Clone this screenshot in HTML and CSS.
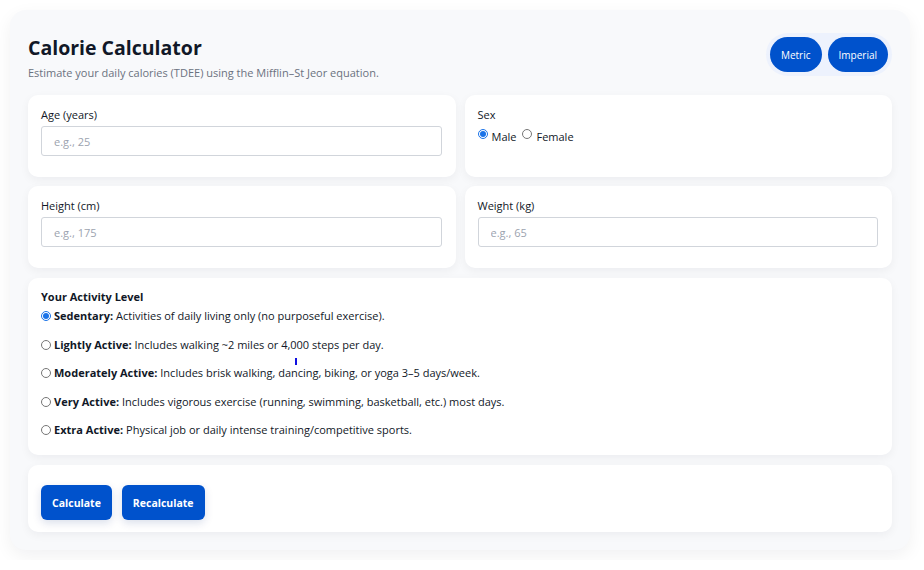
FILE: index.html
```html
<!DOCTYPE html>
<html lang="en">
<head>
<meta charset="utf-8">
<title>Calorie Calculator</title>
<link rel="stylesheet" href="styles.css">
</head>
<body>
<div class="app">
  <header class="header">
    <div class="heading">
      <h1 class="title">Calorie Calculator</h1>
      <p class="subtitle">Estimate your daily calories (TDEE) using the Mifflin–St Jeor equation.</p>
    </div>
    <div class="units">
      <button class="unit-btn">Metric</button>
      <button class="unit-btn">Imperial</button>
    </div>
  </header>

  <div class="grid">
    <div class="card">
      <label class="label" for="age">Age (years)</label>
      <input class="input" id="age" type="text" placeholder="e.g., 25">
    </div>
    <div class="card">
      <div class="label">Sex</div>
      <div class="sex-row">
        <label class="sex-opt"><input class="radio" type="radio" name="sex" checked> Male</label>
        <label class="sex-opt"><input class="radio" type="radio" name="sex"> Female</label>
      </div>
    </div>
    <div class="card">
      <label class="label" for="height">Height (cm)</label>
      <input class="input" id="height" type="text" placeholder="e.g., 175">
    </div>
    <div class="card">
      <label class="label" for="weight">Weight (kg)</label>
      <input class="input" id="weight" type="text" placeholder="e.g., 65">
    </div>
  </div>

  <div class="card activity">
    <div class="activity-title">Your Activity Level</div>
    <label class="act-opt"><input class="radio" type="radio" name="act" checked><b>Sedentary:</b> Activities of daily living only (no purposeful exercise).</label>
    <label class="act-opt"><input class="radio" type="radio" name="act"><b>Lightly Active:</b> Includes walking ~2 miles or 4,000 steps per day.</label>
    <label class="act-opt"><input class="radio" type="radio" name="act"><b>Moderately Active:</b> Includes brisk walking, dancing, biking, or yoga 3–5 days/week.</label>
    <label class="act-opt"><input class="radio" type="radio" name="act"><b>Very Active:</b> Includes vigorous exercise (running, swimming, basketball, etc.) most days.</label>
    <label class="act-opt"><input class="radio" type="radio" name="act"><b>Extra Active:</b> Physical job or daily intense training/competitive sports.</label>
    <span class="caret"></span>
  </div>

  <div class="card actions">
    <button class="btn">Calculate</button>
    <button class="btn">Recalculate</button>
  </div>
</div>
</body>
</html>
```
FILE: styles.css
```css
* { box-sizing: border-box; }
html, body { margin: 0; background: #ffffff; }
body {
  padding: 10px;
  font-family: "Open Sans", "Noto Sans", sans-serif;
  color: #111827;
}
.app {
  width: 900px;
  background: #f8f9fb;
  border-radius: 16px;
  box-shadow: 0 6px 18px rgba(15, 23, 42, 0.06);
  padding: 25px 18px 18px;
}
.header {
  display: flex;
  justify-content: space-between;
  align-items: flex-start;
  margin-bottom: 15px;
}
.title {
  margin: 0;
  font-size: 19.5px;
  line-height: 26px;
  font-weight: 700;
  color: #111827;
}
.subtitle {
  margin: 5px 0 0;
  font-size: 11px;
  line-height: 14px;
  color: #6b7280;
}
.units {
  display: flex;
  gap: 6px;
  padding: 4px;
  background: #edf2fd;
  border-radius: 24px;
  margin-top: -2px;
}
.unit-btn {
  height: 35px;
  padding: 0 11px;
  border: none;
  border-radius: 18px;
  background: #0052cc;
  color: #fff;
  font-family: inherit;
  font-size: 10px;
}
.grid {
  display: grid;
  grid-template-columns: 1fr 1fr;
  gap: 9px 9px;
}
.card {
  background: #fff;
  border-radius: 10px;
  box-shadow: 0 3px 10px rgba(15, 23, 42, 0.05);
  padding: 12px 14px 21px 13px;
}
.label {
  display: block;
  font-size: 11px;
  line-height: 16px;
  margin-bottom: 3px;
  color: #111827;
}
.input {
  display: block;
  width: 100%;
  height: 30px;
  border: 1px solid #d1d5db;
  border-radius: 3px;
  padding: 0 12px;
  font-family: inherit;
  font-size: 11px;
  color: #111827;
}
.input::placeholder { color: #9ca3af; }
.sex-row { display: flex; gap: 6px; font-size: 11px; margin-top: 0; }
.sex-opt { display: inline-flex; align-items: flex-start; line-height: 22px; }
.sex-opt .radio { margin: 3px 4px 0 0; }
.radio {
  width: 10px;
  height: 10px;
  margin: 0 3px 0 0;
  accent-color: #1a73e8;
}
.activity {
  margin-top: 10px;
  padding: 11px 14px 18px 13px;
  position: relative;
}
.activity-title {
  font-size: 11px;
  font-weight: 700;
  line-height: 16px;
  margin-bottom: 4px;
}
.act-opt {
  display: flex;
  align-items: center;
  font-size: 11px;
  line-height: 14px;
  margin-bottom: 14.5px;
}
.act-opt:last-of-type { margin-bottom: 0; }
.act-opt b { margin-right: 3px; }
.caret {
  position: absolute;
  left: 267px;
  top: 80px;
  width: 2px;
  height: 7px;
  background: #1010e0;
}
.actions {
  margin-top: 10px;
  display: flex;
  gap: 10px;
  padding: 20px 13px 12px;
}
.btn {
  height: 35px;
  padding: 0 11px;
  border: none;
  border-radius: 6px;
  background: #0052cc;
  color: #fff;
  font-family: inherit;
  font-size: 10.5px;
  font-weight: 700;
  box-shadow: 0 3px 8px rgba(0, 40, 120, 0.15);
}
```
